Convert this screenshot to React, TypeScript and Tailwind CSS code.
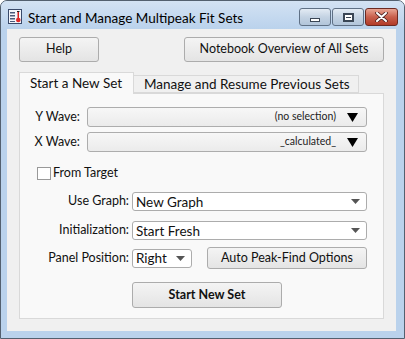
import React from "react";

const font = { fontFamily: 'Lato, "Noto Sans", sans-serif' };

function TitleIcon() {
  return (
    <svg width="14" height="15" viewBox="0 0 14 15">
      <rect x="0.5" y="0.5" width="13" height="14" fill="#f4f6fb" stroke="#3a4a6a" />
      <rect x="2" y="3" width="5" height="1.5" fill="#4a5a7a" />
      <rect x="2" y="6" width="5" height="1.5" fill="#4a5a7a" />
      <rect x="2" y="9" width="5" height="1.5" fill="#4a5a7a" />
      <rect x="2" y="12" width="5" height="1" fill="#4a5a7a" />
      <rect x="9.5" y="2" width="1.5" height="7" fill="#d02020" />
      <rect x="9" y="2" width="2.5" height="1" fill="#222" />
      <circle cx="10.3" cy="11" r="2.3" fill="#e02828" />
    </svg>
  );
}

function WinButton({ kind }: { kind: "min" | "max" | "close" }) {
  if (kind === "close") {
    return (
      <div className="w-[33px] h-[18px] rounded-[3px] border border-[#6b2a22] bg-gradient-to-b from-[#e8a493] via-[#c85f4c] to-[#b23b28] flex items-center justify-center">
        <svg width="13" height="10" viewBox="0 0 13 10">
          <path d="M2 1 L11 9 M11 1 L2 9" stroke="#4a2020" strokeWidth="3.6" strokeLinecap="round" />
          <path d="M2 1 L11 9 M11 1 L2 9" stroke="#fff" strokeWidth="2" strokeLinecap="round" />
        </svg>
      </div>
    );
  }
  return (
    <div className="w-[32px] h-[18px] rounded-[3px] border border-[#5f7085] bg-gradient-to-b from-[#e3ebf4] via-[#c4d3e3] to-[#b2c5da] flex items-center justify-center">
      {kind === "min" ? (
        <div className="w-[10px] h-[4px] mt-[5px] border border-[#3a4655] bg-white" />
      ) : (
        <div className="w-[11px] h-[9px] border-[2px] border-[#3a4655] bg-white flex items-center justify-center">
          <div className="w-[5px] h-[1px] bg-[#3a4655]" />
        </div>
      )}
    </div>
  );
}

function Btn({ label, className, bold }: { label: string; className: string; bold?: boolean }) {
  return (
    <div
      className={
        "flex items-center justify-center rounded-[3px] border border-[#acacac] bg-gradient-to-b from-[#f4f4f4] to-[#e4e4e4] text-[#111] " +
        (bold ? "font-bold text-[12.5px] " : "text-[12.5px] ") +
        className
      }
    >
      {label}
    </div>
  );
}

function WavePopup({ value }: { value: string }) {
  return (
    <div className="w-[280px] h-[20px] rounded-[3px] border border-[#adadad] bg-gradient-to-b from-[#f7f7f7] to-[#ebebeb] flex items-center justify-end pr-[8px]">
      <span className="text-[10.5px] text-[#222] mr-[11px]">{value}</span>
      <svg width="11" height="9" viewBox="0 0 11 9">
        <path d="M0 0 L11 0 L5.5 9 Z" fill="#000" />
      </svg>
    </div>
  );
}

function Menu({ value, width }: { value: string; width: string }) {
  return (
    <div className={"h-[19px] rounded-[3px] border border-[#acacac] bg-white flex items-center justify-between pl-[3px] pr-[6px] " + width}>
      <span className="text-[13.5px] text-[#111] leading-none mt-[2px]">{value}</span>
      <svg width="9" height="5" viewBox="0 0 9 5">
        <path d="M0 0 L9 0 L4.5 5 Z" fill="#555" />
      </svg>
    </div>
  );
}

function Row({ label, children, className }: { label: string; children: React.ReactNode; className: string }) {
  return (
    <div className={"flex items-center " + className}>
      <div className="w-[112px] text-right text-[12.5px] leading-none text-[#111] pr-[3px]">{label}</div>
      {children}
    </div>
  );
}

export default function App() {
  return (
    <div style={font} className="w-[405px] h-[339px] bg-[#bad2ec] border border-[#53606f] rounded-t-[7px] flex flex-col overflow-hidden">
      {/* Title bar */}
      <div className="h-[28px] flex items-start bg-gradient-to-b from-[#d3e2f3] to-[#bad2ec]">
        <div className="pl-[7px] pt-[8px]">
          <TitleIcon />
        </div>
        <div className="pl-[6px] pt-[7px] text-[13.5px] text-black">Start and Manage Multipeak Fit Sets</div>
        <div className="ml-auto flex gap-[1px] pt-[7px] pr-[6px]">
          <WinButton kind="min" />
          <WinButton kind="max" />
          <WinButton kind="close" />
        </div>
      </div>

      {/* Client area */}
      <div className="ml-[6px] w-[389px] h-[302px] bg-[#f0f0f0] flex flex-col px-[12px] pt-[8px]">
        <div className="flex justify-between">
          <Btn label="Help" className="w-[80px] h-[25px]" />
          <Btn label="Notebook Overview of All Sets" className="w-[200px] h-[25px]" />
        </div>

        {/* Tabs */}
        <div className="flex items-end mt-[10px] h-[21px]">
          <div className="w-[115px] h-[22px] bg-[#f9f9f9] border border-b-0 border-[#d9d9d9] flex items-center pl-[10px] text-[13.5px] text-[#111] relative z-10 -mb-[1px]">
            Start a New Set
          </div>
          <div className="w-[225px] h-[18px] bg-[#f0f0f0] border border-l-0 border-[#d9d9d9] flex items-center pl-[10px] text-[13.5px] text-[#111] whitespace-nowrap">
            Manage and Resume Previous Sets
          </div>
        </div>

        {/* Panel */}
        <div className="w-[365px] h-[226px] bg-[#f9f9f9] border border-[#d9d9d9] flex flex-col pt-[13px]">
          <div className="flex items-center h-[20px]">
            <div className="w-[60px] text-right text-[12.5px] text-[#111]">Y Wave:</div>
            <div className="ml-[7px]">
              <WavePopup value="(no selection)" />
            </div>
          </div>
          <div className="flex items-center h-[20px] mt-[5px]">
            <div className="w-[60px] text-right text-[12.5px] text-[#111]">X Wave:</div>
            <div className="ml-[7px]">
              <WavePopup value="_calculated_" />
            </div>
          </div>

          <div className="flex items-center h-[13px] mt-[15px] pl-[17px]">
            <div className="w-[14px] h-[13px] border border-[#999] bg-white" />
            <span className="ml-[2px] text-[12.5px] leading-none text-[#111]">From Target</span>
          </div>

          <Row label="Use Graph:" className="h-[19px] mt-[12px]">
            <Menu value="New Graph" width="w-[235px]" />
          </Row>
          <Row label="Initialization:" className="h-[19px] mt-[10px]">
            <Menu value="Start Fresh" width="w-[235px]" />
          </Row>
          <Row label="Panel Position:" className="h-[22px] mt-[7px]">
            <Menu value="Right" width="w-[60px]" />
            <Btn label="Auto Peak-Find Options" className="ml-[15px] w-[160px] h-[22px]" />
          </Row>
          <div className="pl-[112px] mt-[13px]">
            <Btn label="Start New Set" bold className="w-[150px] h-[26px]" />
          </div>
        </div>
      </div>
    </div>
  );
}
